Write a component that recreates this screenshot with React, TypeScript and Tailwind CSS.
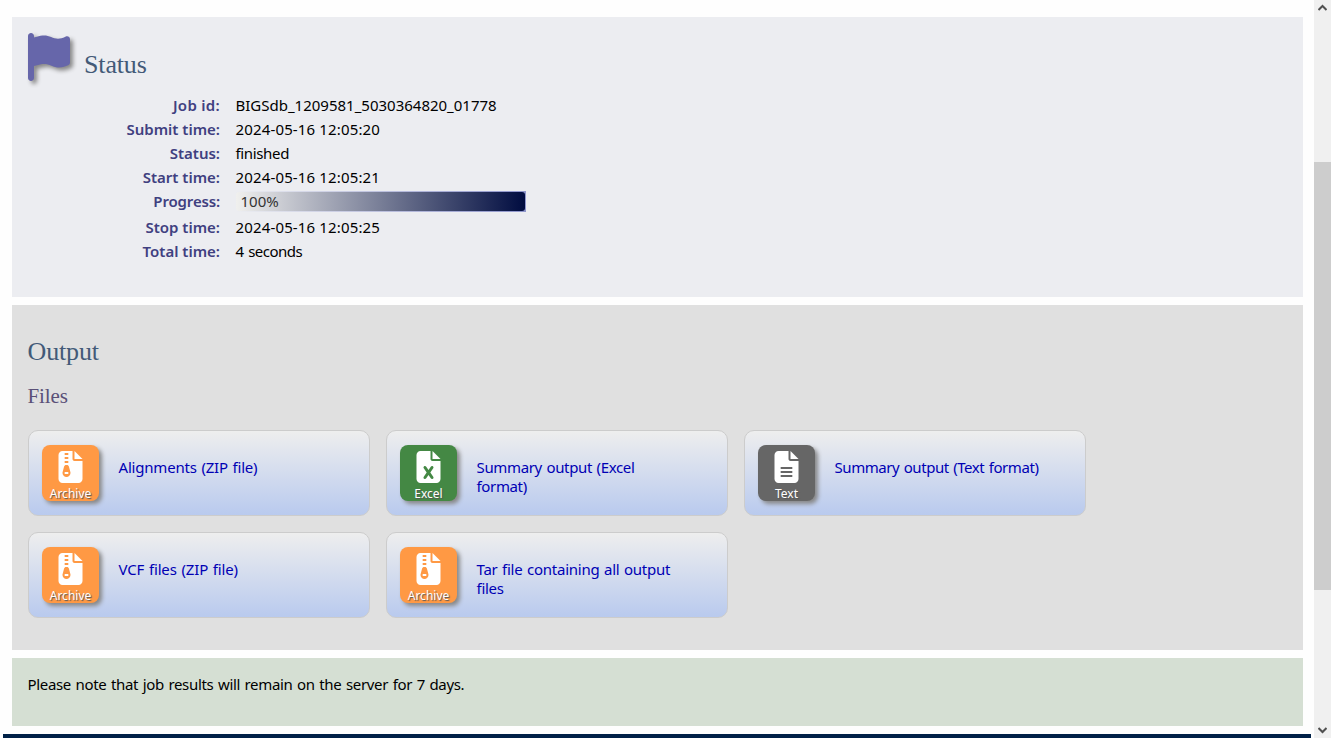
import type { ReactNode } from 'react';
import { FaFlag, FaFileZipper, FaFileExcel, FaFileLines } from 'react-icons/fa6';
import type { IconType } from 'react-icons';

const job: { label: string; value: string; labelClass: string; valueClass: string }[] = [
  { label: 'Job id:', value: 'BIGSdb_1209581_5030364820_01778', labelClass: 'tracking-[0.3px]', valueClass: '' },
  { label: 'Submit time:', value: '2024-05-16 12:05:20', labelClass: '', valueClass: 'tracking-[0.15px]' },
  { label: 'Status:', value: 'finished', labelClass: '', valueClass: 'tracking-[-0.35px]' },
  { label: 'Start time:', value: '2024-05-16 12:05:21', labelClass: '', valueClass: 'tracking-[0.15px]' },
  { label: 'Progress:', value: '', labelClass: 'tracking-[-0.15px]', valueClass: '' },
  { label: 'Stop time:', value: '2024-05-16 12:05:25', labelClass: '', valueClass: 'tracking-[0.15px]' },
  { label: 'Total time:', value: '4 seconds', labelClass: '', valueClass: 'tracking-[-0.5px] [word-spacing:1.2px]' },
];

function FileCard({ icon: Icon, kind, color, tracking, children }: { icon: IconType; kind: string; color: string; tracking: string; children: ReactNode }) {
  return (
    <div className="flex h-[86px] w-[342px] rounded-[10px] border border-[#ccc] bg-linear-to-b/srgb from-[#eee] to-[#b9caee] pt-[14px] pl-[13px]">
      <div className={`flex h-[56px] w-[57px] shrink-0 flex-col items-center rounded-[8px] pt-[6px] shadow-[3px_3px_4px_#888] ${color}`}>
        <Icon className="h-8 w-[25px] shrink-0 text-white" />
        <span className="mt-[3px] text-[12px] leading-[16px] whitespace-nowrap text-white [text-shadow:1px_1px_1px_#555]">{kind}</span>
      </div>
      <a className={`mt-[13px] ml-[19.5px] text-[15px] leading-[19px] whitespace-nowrap text-[#0000b4] [word-spacing:1px] ${tracking}`}>{children}</a>
    </div>
  );
}

export default function App() {
  return (
    <div className="flex h-[738px] w-[1331px] overflow-hidden bg-[#fefefe] font-['Noto_Sans',sans-serif] text-[15px] text-black">
      <div className="flex w-[1314px] flex-col pt-[17px]">
        <section className="mr-[11px] ml-3 h-[280px] bg-[#ecedf1] pt-4 pl-4">
          <div className="flex h-12">
            <FaFlag className="h-12 w-[42px] text-[#66a] [filter:drop-shadow(3px_3px_2px_#888)]" />
            <h2 className="mt-[17px] ml-[14px] font-['Liberation_Serif',serif] text-[26px] leading-[30px] tracking-[-0.15px] text-[#435a78]">Status</h2>
          </div>
          <dl className="mt-[12px]">
            {job.map((r) => (
              <div key={r.label} className={`flex leading-6 ${r.label === 'Progress:' ? 'h-[26px]' : 'h-6'}`}>
                <dt className={`w-[192px] text-right font-semibold text-[#404080] ${r.labelClass}`}>{r.label}</dt>
                <dd className={`ml-[15.5px] ${r.valueClass}`}>
                  {r.value || (
                    <div className="mt-[2px] h-[21px] w-[290px] bg-linear-to-r/srgb from-[#ecedf1] to-[#8f96cc] py-px pr-px">
                      <div className="h-[19px] rounded-[3px] bg-linear-to-r/srgb from-[#f0f0ee] to-[#000c40] pl-[5px] leading-[19px] text-[#333]">100%</div>
                    </div>
                  )}
                </dd>
              </div>
            ))}
          </dl>
        </section>
        <section className="mt-2 mr-[11px] ml-3 h-[345px] bg-[#e0e0e0] pt-8 pl-4">
          <h2 className="-ml-[0.5px] font-['Liberation_Serif',serif] text-[26px] leading-[30px] tracking-[-0.15px] text-[#435a78]">Output</h2>
          <h3 className="mt-[17px] -ml-[0.5px] font-['Liberation_Serif',serif] text-[21px] leading-6 tracking-[-0.1px] text-[#5a5078]">Files</h3>
          <div className="mt-[22px] grid grid-cols-[342px_342px_342px] gap-4">
            <FileCard icon={FaFileZipper} kind="Archive" color="bg-[#f94]" tracking="tracking-[-0.2px]">Alignments (ZIP file)</FileCard>
            <FileCard icon={FaFileExcel} kind="Excel" color="bg-[#484]" tracking="tracking-[-0.35px]">Summary output (Excel<br />format)</FileCard>
            <FileCard icon={FaFileLines} kind="Text" color="bg-[#666]" tracking="tracking-[-0.44px]">Summary output (Text format)</FileCard>
            <FileCard icon={FaFileZipper} kind="Archive" color="bg-[#f94]" tracking="tracking-[-0.15px]">VCF files (ZIP file)</FileCard>
            <FileCard icon={FaFileZipper} kind="Archive" color="bg-[#f94]" tracking="tracking-[-0.26px]">Tar file containing all output<br />files</FileCard>
          </div>
        </section>
        <section className="mt-2 mr-[11px] ml-3 h-[68px] bg-[#d5dfd3] pt-[14px] pl-[15.5px] leading-6 tracking-[-0.335px] [word-spacing:1px]">
          Please note that job results will remain on the server for 7 days.
        </section>
        <div className="mt-2 mr-[3px] ml-[3px] h-1 bg-[#002147]" />
      </div>
      <div className="flex w-[17px] flex-col items-center bg-[#f0f0f0]">
        <svg className="mt-[4px] h-[8px] w-[9px]" viewBox="0 0 9 8"><path d="M0.5 6 4.5 2 8.5 6" fill="none" stroke="#505050" strokeWidth="2" /></svg>
        <div className="mt-[150px] h-[428px] w-full bg-[#cdcdcd]" />
        <svg className="mt-[136px] h-[8px] w-[9px]" viewBox="0 0 9 8"><path d="M0.5 2 4.5 6 8.5 2" fill="none" stroke="#505050" strokeWidth="2" /></svg>
      </div>
    </div>
  );
}
